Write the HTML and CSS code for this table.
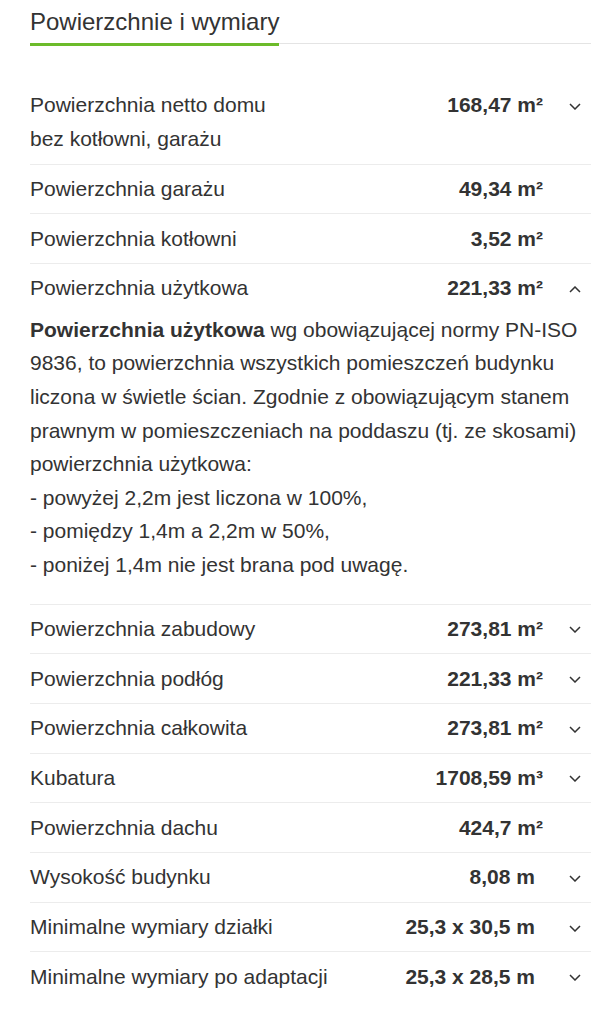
FILE: index.html
```html
<!DOCTYPE html>
<html lang="pl">
<head>
<meta charset="utf-8">
<link rel="stylesheet" href="styles.css">
</head>
<body>
<section class="specs">
  <div class="specs-head"><h2 class="specs-title">Powierzchnie i wymiary</h2></div>
  <div class="rows">
    <div class="row">
      <div class="label">Powierzchnia netto domu<br>bez kotłowni, garażu</div>
      <div class="value">168,47 m²</div>
      <div class="toggle"><svg class="chev" viewBox="0 0 12 7"><path d="M1 1l5 5 5-5"/></svg></div>
    </div>
    <div class="row">
      <div class="label">Powierzchnia garażu</div>
      <div class="value">49,34 m²</div>
      <div class="toggle"></div>
    </div>
    <div class="row">
      <div class="label">Powierzchnia kotłowni</div>
      <div class="value">3,52 m²</div>
      <div class="toggle"></div>
    </div>
    <div class="row row-open">
      <div class="label">Powierzchnia użytkowa</div>
      <div class="value">221,33 m²</div>
      <div class="toggle"><svg class="chev" viewBox="0 0 12 7"><path d="M1 6l5-5 5 5"/></svg></div>
      <div class="desc"><strong>Powierzchnia użytkowa</strong> wg obowiązującej normy PN-ISO 9836, to powierzchnia wszystkich pomieszczeń budynku liczona w świetle ścian. Zgodnie z obowiązującym stanem prawnym w pomieszczeniach na poddaszu (tj. ze skosami) powierzchnia użytkowa:<br>- powyżej 2,2m jest liczona w 100%,<br>- pomiędzy 1,4m a 2,2m w 50%,<br>- poniżej 1,4m nie jest brana pod uwagę.</div>
    </div>
    <div class="row">
      <div class="label">Powierzchnia zabudowy</div>
      <div class="value">273,81 m²</div>
      <div class="toggle"><svg class="chev" viewBox="0 0 12 7"><path d="M1 1l5 5 5-5"/></svg></div>
    </div>
    <div class="row">
      <div class="label">Powierzchnia podłóg</div>
      <div class="value">221,33 m²</div>
      <div class="toggle"><svg class="chev" viewBox="0 0 12 7"><path d="M1 1l5 5 5-5"/></svg></div>
    </div>
    <div class="row">
      <div class="label">Powierzchnia całkowita</div>
      <div class="value">273,81 m²</div>
      <div class="toggle"><svg class="chev" viewBox="0 0 12 7"><path d="M1 1l5 5 5-5"/></svg></div>
    </div>
    <div class="row">
      <div class="label">Kubatura</div>
      <div class="value">1708,59 m³</div>
      <div class="toggle"><svg class="chev" viewBox="0 0 12 7"><path d="M1 1l5 5 5-5"/></svg></div>
    </div>
    <div class="row">
      <div class="label">Powierzchnia dachu</div>
      <div class="value">424,7 m²</div>
      <div class="toggle"></div>
    </div>
    <div class="row">
      <div class="label">Wysokość budynku</div>
      <div class="value value-m">8,08 m</div>
      <div class="toggle"><svg class="chev" viewBox="0 0 12 7"><path d="M1 1l5 5 5-5"/></svg></div>
    </div>
    <div class="row">
      <div class="label">Minimalne wymiary działki</div>
      <div class="value value-m">25,3 x 30,5 m</div>
      <div class="toggle"><svg class="chev" viewBox="0 0 12 7"><path d="M1 1l5 5 5-5"/></svg></div>
    </div>
    <div class="row">
      <div class="label">Minimalne wymiary po adaptacji</div>
      <div class="value value-m">25,3 x 28,5 m</div>
      <div class="toggle"><svg class="chev" viewBox="0 0 12 7"><path d="M1 1l5 5 5-5"/></svg></div>
    </div>
  </div>
</section>
</body>
</html>
```
FILE: styles.css
```css
html, body {
  margin: 0;
  padding: 0;
  background: #fff;
}
body {
  font-family: "Liberation Sans", Arial, sans-serif;
  color: #333;
}
.specs {
  margin-left: 30px;
}
.specs-head {
  border-bottom: 1px solid #e4e4e4;
  display: flex;
}
.specs-title {
  margin: 0 0 -3px 0;
  padding: 8px 0 7px 0;
  font-size: 24px;
  line-height: 28px;
  font-weight: normal;
  color: #333;
  border-bottom: 3px solid #6cbb2a;
  width: 249px;
  white-space: nowrap;
}
.rows {
  margin-top: 37px;
}
.row {
  display: grid;
  grid-template-columns: 1fr auto 48px;
  align-items: start;
  padding: 7.4px 0 7.3px;
  font-size: 21px;
  line-height: 34px;
}
.row + .row {
  border-top: 1px solid #ececec;
}
.value {
  font-weight: bold;
  text-align: right;
  white-space: nowrap;
}
.value-m {
  padding-right: 8px;
}
.toggle {
  height: 34px;
  display: flex;
  align-items: center;
  justify-content: flex-end;
  padding-right: 10px;
}
.chev {
  width: 12px;
  height: 7px;
  margin-top: 2px;
  fill: none;
  stroke: #333;
  stroke-width: 1.5;
}
.row-open {
  padding-bottom: 22px;
}
.desc {
  grid-column: 1 / -1;
  margin-top: 7.3px;
  padding-right: 10px;
  line-height: 33.6px;
}
.desc strong {
  font-weight: bold;
}
```
